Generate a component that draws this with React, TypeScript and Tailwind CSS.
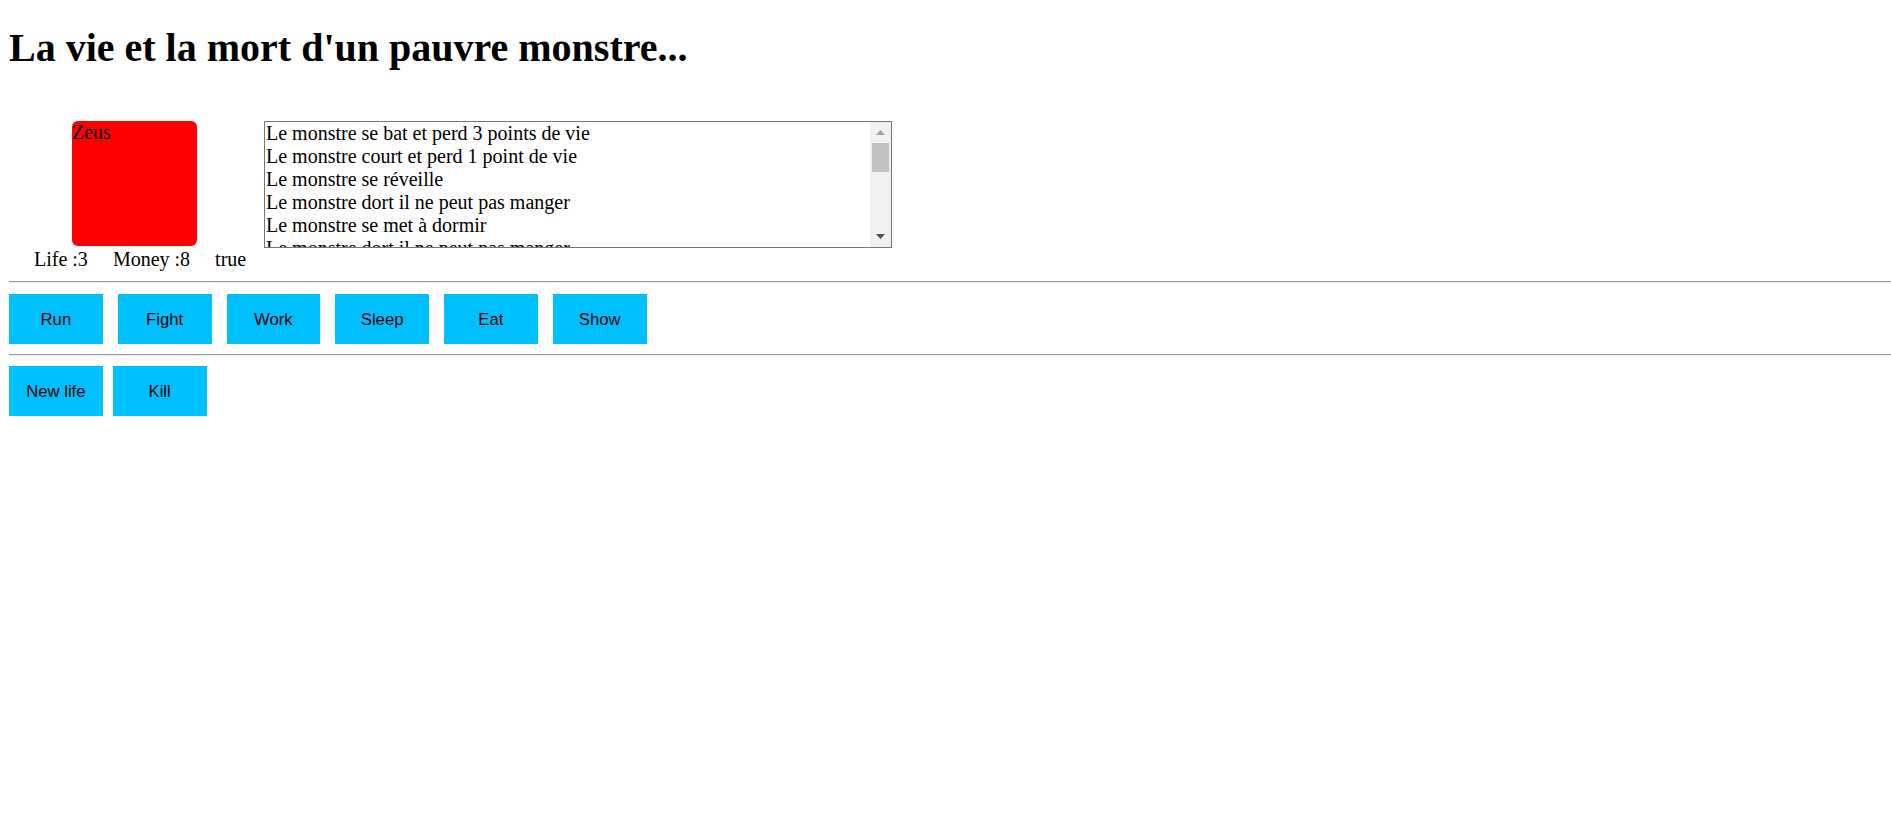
import React from "react";

const actions = ["Run", "Fight", "Work", "Sleep", "Eat", "Show"];
const lifeActions = ["New life", "Kill"];

const logLines = [
  "Le monstre se bat et perd 3 points de vie",
  "Le monstre court et perd 1 point de vie",
  "Le monstre se réveille",
  "Le monstre dort il ne peut pas manger",
  "Le monstre se met à dormir",
  "Le monstre dort il ne peut pas manger",
];

const Rule: React.FC = () => (
  <div className="h-0 border-t border-b border-t-[#9a9a9a] border-b-[#eeeeee]" />
);

const ActionButton: React.FC<{ label: string }> = ({ label }) => (
  <button className="w-[93.75px] h-[50px] bg-[#00bfff] text-black text-[16.67px] font-['Liberation_Sans',Arial,sans-serif] flex items-center justify-center">
    {label}
  </button>
);

const App: React.FC = () => {
  return (
    <div className="min-h-screen bg-white pl-[9px] text-black font-['Liberation_Serif','Times_New_Roman',serif]">
      <h1 className="pt-[25px] text-[40px] leading-[46px] font-bold">
        La vie et la mort d'un pauvre monstre...
      </h1>

      <div className="mt-[50px] flex items-start">
        {/* monster + stats */}
        <div className="w-[255px] flex flex-col">
          <div className="ml-[63px] w-[125px] h-[125px] rounded-[6px] bg-[#ff0000] text-[20px] leading-[23px]">
            Zeus
          </div>
          <div className="mt-[2px] pl-[25px] flex gap-[25px] text-[20px] leading-[23px]">
            <span>Life :3</span>
            <span>Money :8</span>
            <span>true</span>
          </div>
        </div>

        {/* log textarea */}
        <div className="w-[628px] h-[127px] border border-[#767676] flex bg-white">
          <div className="flex-1 overflow-hidden pl-[1px] text-[20px] leading-[23px] whitespace-nowrap">
            {logLines.map((line, i) => (
              <div key={i}>{line}</div>
            ))}
          </div>
          <div className="w-[21px] bg-[#f1f1f1] flex flex-col">
            <div className="h-[21px] flex items-center justify-center">
              <svg width="9" height="5" viewBox="0 0 9 5">
                <path d="M4.5 0 L9 5 L0 5 Z" fill="#a3a3a3" />
              </svg>
            </div>
            <div className="ml-[2px] mr-[2px] h-[29px] bg-[#c1c1c1]" />
            <div className="flex-1" />
            <div className="h-[21px] flex items-center justify-center">
              <svg width="9" height="5" viewBox="0 0 9 5">
                <path d="M0 0 L9 0 L4.5 5 Z" fill="#505050" />
              </svg>
            </div>
          </div>
        </div>
      </div>

      <div className="mt-[10px]">
        <Rule />
      </div>
      <div className="mt-[11px] flex gap-[15px]">
        {actions.map((a) => (
          <ActionButton key={a} label={a} />
        ))}
      </div>

      <div className="mt-[10px]">
        <Rule />
      </div>
      <div className="mt-[10px] flex gap-[10px]">
        {lifeActions.map((a) => (
          <ActionButton key={a} label={a} />
        ))}
      </div>
    </div>
  );
};

export default App;
